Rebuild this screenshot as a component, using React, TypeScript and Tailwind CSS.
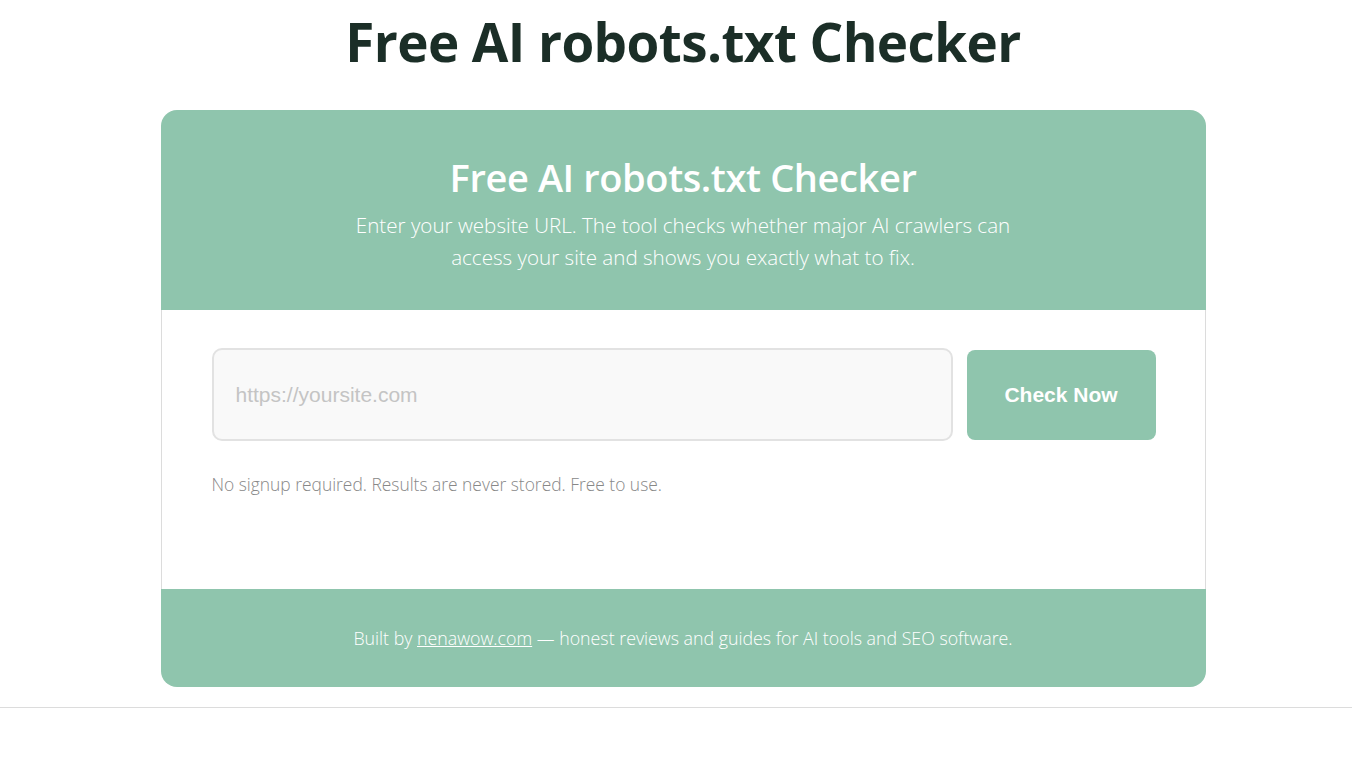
export default function App() {
  return (
    <div className="min-h-screen bg-white font-['Open_Sans','Noto_Sans',sans-serif]">
      <div className="flex flex-col items-center pl-[14px]">
        <h1 className="mt-[6px] text-[53px] font-bold leading-[72px] tracking-[-0.6px] text-[#1b2e27]">
          Free AI robots.txt Checker
        </h1>

        <div className="mt-[32px] w-[1045px] overflow-hidden rounded-2xl">
          <div className="flex h-[200px] flex-col items-center bg-[#8fc5ad] pt-[40px] text-center text-white">
            <h2 className="text-[38px] font-semibold leading-[54px] tracking-[-0.4px]">
              Free AI robots.txt Checker
            </h2>
            <p className="mt-[5px] w-[680px] text-[20.6px] font-light leading-[32px]">
              Enter your website URL. The tool checks whether major AI crawlers can access your site and
              shows you exactly what to fix.
            </p>
          </div>

          <div className="h-[279px] border-x border-[#dcdcdc] bg-white pt-[38px] pr-[49px] pl-[50px]">
            <div className="flex items-center gap-[14px]">
              <input
                type="text"
                placeholder="https://yoursite.com"
                className="h-[93px] w-[741px] shrink-0 rounded-[10px] border-2 border-[#e2e2e2] bg-[#f9f9f9] px-[22px] font-['Liberation_Sans',Arial,sans-serif] text-[21px] text-[#333] outline-none placeholder:text-[#c4c4c4]"
              />
              <button className="h-[90px] w-[189px] shrink-0 rounded-[8px] bg-[#8fc5ad] font-['Liberation_Sans',Arial,sans-serif] text-[21px] font-bold text-white">
                Check Now
              </button>
            </div>
            <p className="mt-[30px] text-[17.4px] font-light text-[#888888]">
              No signup required. Results are never stored. Free to use.
            </p>
          </div>

          <div className="flex h-[98px] items-center justify-center bg-[#8fc5ad] text-[17.8px] font-light text-white">
            <span>
              Built by{" "}
              <a href="#" className="underline">
                nenawow.com
              </a>{" "}
              — honest reviews and guides for AI tools and SEO software.
            </span>
          </div>
        </div>
      </div>
      <div className="mt-[20px] border-t border-[#dcdcdc]" />
    </div>
  );
}
